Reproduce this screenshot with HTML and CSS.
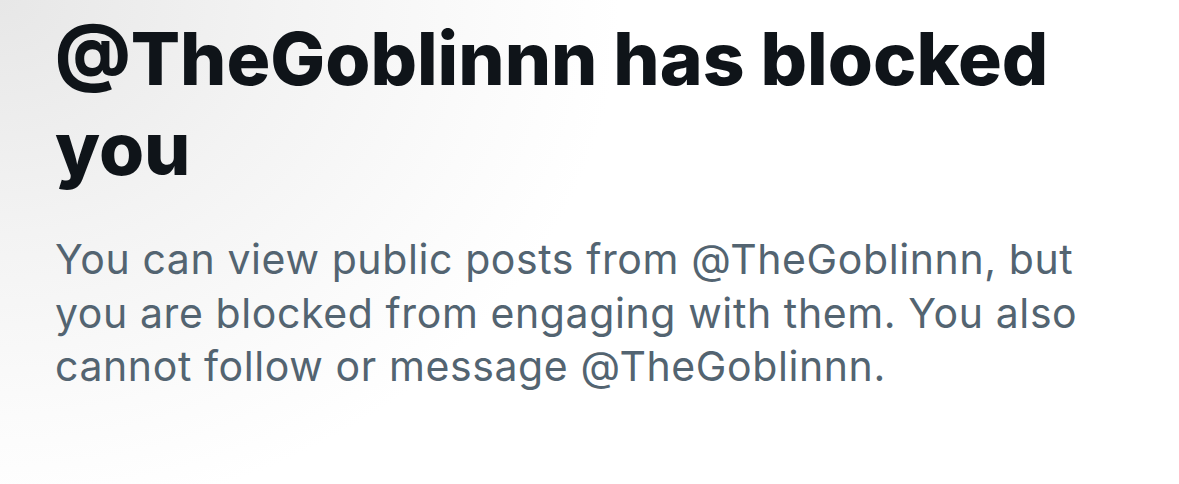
FILE: index.html
```html
<!DOCTYPE html>
<html>
  <head>
    <meta charset="utf-8" />
    <link rel="stylesheet" href="styles.css">
  </head>
  <body>
    <div class="notice">
      <h1 class="title">@TheGoblinnn has blocked you</h1>
      <p class="desc">You can view public posts from @TheGoblinnn, but you are blocked from engaging with them. You also cannot follow or message @TheGoblinnn.</p>
    </div>
  </body>
</html>
```

FILE: styles.css
```css
html,
body {
  margin: 0;
  height: 100%;
}
body {
  background: radial-gradient(ellipse 620px 520px at 0 0, #e7e7e7 0%, #f3f3f3 45%, #fbfbfb 80%, #ffffff 100%);
  background-color: #fff;
  font-family: Inter, "Noto Sans", sans-serif;
}
.notice {
  padding: 14px 0 0 55px;
  width: 1040px;
}
.title {
  margin: 0;
  font-size: 73px;
  font-weight: 800;
  line-height: 90px;
  letter-spacing: 0;
  color: #0f1419;
}
.desc {
  margin: 39px 0 0;
  font-size: 41px;
  line-height: 53.5px;
  letter-spacing: 0.6px;
  color: #536471;
}
```
